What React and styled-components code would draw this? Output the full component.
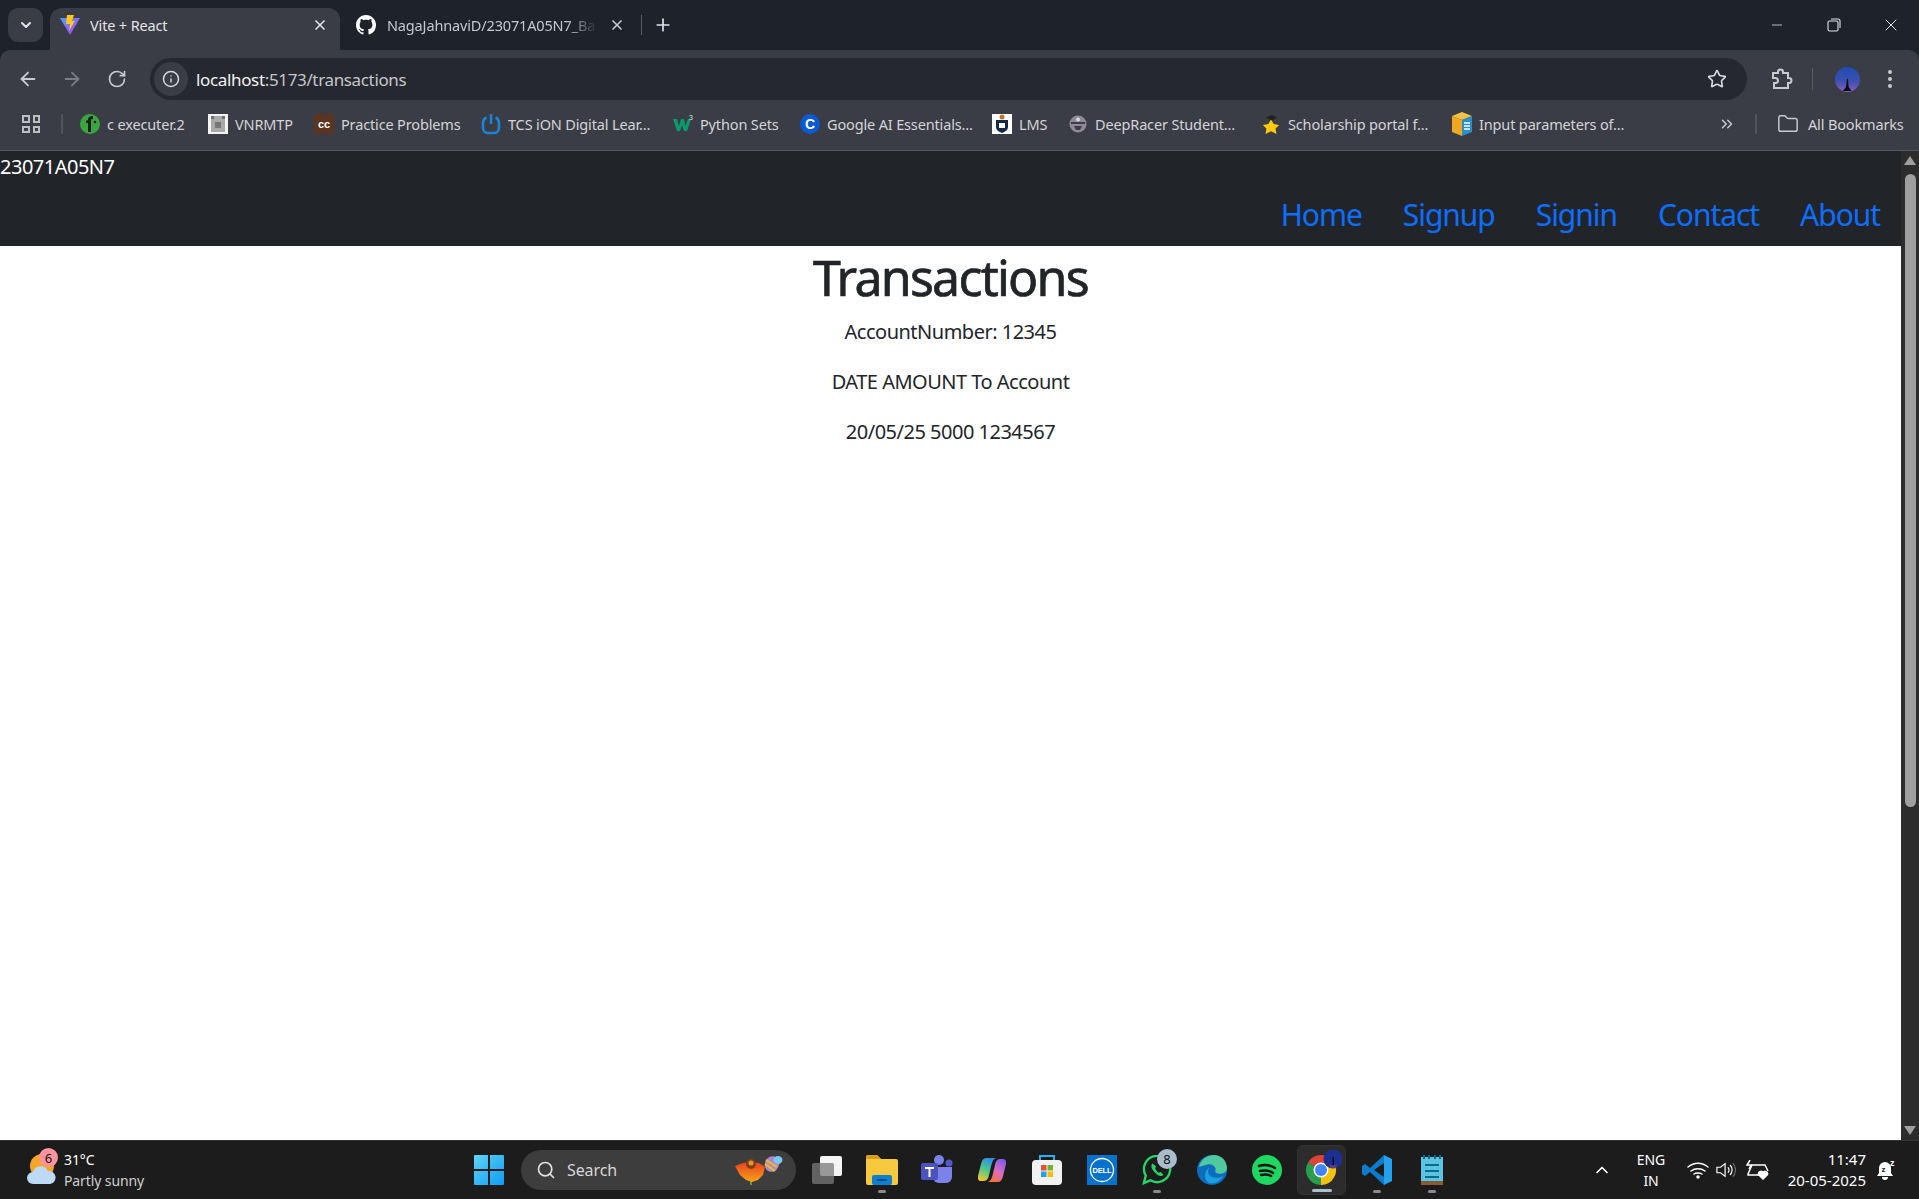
import styled, { createGlobalStyle } from 'styled-components'
import { ArrowLeft, ArrowRight, RotateCw, Info, Star, X, Plus, ChevronDown, ChevronUp, ChevronsRight, Folder, Search, Minus } from 'lucide-react'

const UI_FONT = '"Noto Sans", "Open Sans", sans-serif'

const GlobalStyle = createGlobalStyle`
  html, body { margin: 0; height: 100%; overflow: hidden; background: #fff; }
  body { font-family: ${UI_FONT}; }
  * { box-sizing: border-box; }
`

const Screen = styled.div`
  width: 1919px;
  height: 1199px;
  display: flex;
  flex-direction: column;
  background: #1e222b;
`

/* browser chrome */
const TabStrip = styled.div`
  height: 50px;
  flex: none;
  background: #1e222b;
  display: flex;
  align-items: flex-end;
  padding-left: 8px;
  color: #e3e4e6;
`
const TabMenu = styled.div`
  width: 35px;
  height: 34px;
  margin-bottom: 8px;
  border-radius: 10px;
  background: #3a3d46;
  display: flex;
  align-items: center;
  justify-content: center;
`
const Tab = styled.div`
  width: ${p => p.$width}px;
  height: 42px;
  margin-left: ${p => p.$offset}px;
  padding: 0 ${p => p.$padRight}px 8px 10px;
  display: flex;
  align-items: center;
  gap: ${p => p.$gap}px;
  font-size: 14.5px;
  letter-spacing: -0.15px;
  border-radius: 12px 12px 0 0;
  background: ${p => (p.$active ? '#3a3d46' : 'transparent')};
`
const TabTitle = styled.span`
  flex: 1;
  overflow: hidden;
  white-space: nowrap;
  color: ${p => (p.$dim ? '#c6c8cc' : '#e3e4e6')};
  ${p => (p.$dim ? 'mask-image: linear-gradient(90deg, #000 85%, transparent 100%);' : '')}
`
const TabDivider = styled.div`
  width: 1px;
  height: 20px;
  margin: 0 9px 15px -6px;
  background: #5b5e66;
`
const NewTab = styled.div`
  height: 42px;
  padding-bottom: 8px;
  display: flex;
  align-items: center;
  margin-left: 2px;
`
const WindowControls = styled.div`
  margin-left: auto;
  height: 50px;
  display: flex;
  align-items: center;
`
const WindowButton = styled.div`
  width: 57px;
  display: flex;
  justify-content: center;
`

const Toolbar = styled.div`
  height: 50px;
  flex: none;
  background: #3a3d46;
  border-radius: 10px 10px 0 0;
  padding-top: 8px;
  display: flex;
  align-items: flex-start;
  color: #c8cacd;
`
const NavButtons = styled.div`
  width: 150px;
  height: 42px;
  padding-left: 17px;
  display: flex;
  align-items: center;
  gap: 22px;
`
const ReloadButton = styled.div`
  display: flex;
  margin-left: 2px;
`
const Omnibox = styled.div`
  width: 1597px;
  height: 42px;
  border-radius: 21px;
  background: #262830;
  display: flex;
  align-items: center;
  padding: 0 20px 0 4px;
`
const SiteInfo = styled.div`
  width: 34px;
  height: 34px;
  border-radius: 50%;
  background: #3a3d46;
  display: flex;
  align-items: center;
  justify-content: center;
  margin-right: 8px;
`
const Url = styled.div`
  flex: 1;
  font-size: 17px;
  letter-spacing: -0.35px;
  color: #c4c6ca;
  b { font-weight: 400; color: #f1f2f3; }
`
const ToolbarEnd = styled.div`
  flex: 1;
  height: 42px;
  display: flex;
  align-items: center;
  padding-left: 22px;
`
const ToolbarDivider = styled.div`
  width: 1px;
  height: 22px;
  margin: 0 22px 0 19px;
  background: #565961;
`
const AvatarSlot = styled.div`
  display: flex;
  margin-right: 27px;
`

const BookmarkBar = styled.div`
  height: 51px;
  flex: none;
  background: #3a3d46;
  border-bottom: 1px solid #55575c;
  display: flex;
  align-items: center;
  padding: 0 0 2px 22px;
  font-size: 14.5px;
  letter-spacing: -0.15px;
  color: #d3d4d7;
`
const AppsGrid = styled.div`
  width: 18px;
  height: 18px;
  display: grid;
  grid-template-columns: 1fr 1fr;
  gap: 3px;
  span { border: 2px solid #bdbec2; }
`
const BarDivider = styled.div`
  width: 2px;
  height: 20px;
  background: #50535b;
  margin: ${p => p.$margin};
`
const Bookmark = styled.div`
  flex: 0 0 ${p => p.$width}px;
  display: flex;
  align-items: center;
  gap: 7px;
  white-space: nowrap;
`
const Favicon = styled.div`
  width: 20px;
  height: 20px;
  flex: none;
  display: flex;
  align-items: center;
  justify-content: center;
  font: 700 ${p => p.$size || 11}px/1 "Liberation Sans", sans-serif;
  letter-spacing: 0;
  color: #fff;
  background: ${p => p.$bg || 'transparent'};
  border-radius: ${p => (p.$round ? '50%' : '0')};
`
const AllBookmarks = styled.div`
  display: flex;
  align-items: center;
  gap: 9px;
  white-space: nowrap;
`

/* page */
const Viewport = styled.div`
  flex: 1;
  display: flex;
  min-height: 0;
`
const Page = styled.div`
  flex: 1;
  background: #fff;
  color: #212529;
`
const Navbar = styled.nav`
  height: 95px;
  background: #212529;
  color: #fff;
  font-size: 20px;
  line-height: 30px;
  display: flex;
  flex-direction: column;
  padding-top: 1px;
`
const Brand = styled.div`
  height: 30px;
  letter-spacing: -0.5px;
`
const NavLinks = styled.div`
  flex: 1;
  display: flex;
  justify-content: flex-end;
  align-items: center;
  gap: 41px;
  padding-right: 21px;
`
const NavLink = styled.a`
  color: #0d6efd;
  font-size: 30px;
  letter-spacing: -1.05px;
  line-height: 45px;
`
const Content = styled.main`
  text-align: center;
  padding-top: 1px;
`
const Title = styled.h1`
  margin: 0 0 10px;
  font-size: 50px;
  line-height: 60px;
  font-weight: 400;
  -webkit-text-stroke: 0.7px #212529;
  letter-spacing: -1.75px;
`
const Line = styled.p`
  margin: 0 0 20px;
  font-size: 20px;
  line-height: 30px;
  letter-spacing: -0.5px;
`
const Scrollbar = styled.div`
  width: 18px;
  flex: none;
  background: #2c2c2c;
  display: flex;
  flex-direction: column;
  align-items: center;
  padding: 5px 0;
`
const ScrollArrow = styled.div`
  width: 0;
  height: 0;
  border-left: 6px solid transparent;
  border-right: 6px solid transparent;
  ${p => (p.$down ? 'border-top: 9px solid #9f9f9f;' : 'border-bottom: 9px solid #9f9f9f;')}
  ${p => (p.$down ? 'margin-top: auto;' : '')}
`
const ScrollThumb = styled.div`
  width: 11px;
  height: 633px;
  margin-top: 9px;
  border-radius: 6px;
  background: #9f9f9f;
`

/* taskbar */
const Taskbar = styled.footer`
  height: 59px;
  flex: none;
  background: #1c1c1c;
  border-top: 1px solid #333;
  display: flex;
  align-items: center;
  color: #fff;
  font-size: 14px;
  letter-spacing: -0.1px;
`
const Weather = styled.div`
  width: 461px;
  height: 100%;
  padding-left: 27px;
  display: flex;
  align-items: center;
  gap: 8px;
`
const WeatherIcon = styled.div`
  position: relative;
  width: 29px;
  height: 36px;
`
const Badge = styled.span`
  position: absolute;
  display: flex;
  align-items: center;
  justify-content: center;
  color: #111;
  font-size: 13px;
  letter-spacing: 0;
  border-radius: 50%;
  background: ${p => p.$bg};
  top: ${p => p.$top}px;
  left: ${p => p.$left}px;
  width: ${p => p.$size}px;
  height: ${p => p.$size}px;
`
const WeatherText = styled.div`
  display: flex;
  flex-direction: column;
  line-height: 21px;
  font-size: 14px;
  span:last-child { color: #cfcfcf; }
`
const Slot = styled.div`
  position: relative;
  width: ${p => (p.$active ? 49 : 55)}px;
  margin: ${p => (p.$active ? '0 3px' : '0')};
  height: 50px;
  flex: none;
  display: flex;
  align-items: center;
  justify-content: center;
  border-radius: 6px;
  background: ${p => (p.$active ? '#2c2c2c' : 'transparent')};
  ${p => (p.$active ? 'border: 1px solid #333;' : '')}
`
const StartSlot = styled(Slot)`
  margin-right: 5px;
`
const RunDot = styled.span`
  position: absolute;
  bottom: 2px;
  left: 50%;
  transform: translateX(-50%);
  width: ${p => (p.$wide ? 20 : 8)}px;
  height: 3px;
  border-radius: 2px;
  background: ${p => (p.$wide ? '#a8c0d0' : '#8a8a8a')};
`
const SearchBox = styled.div`
  width: 275px;
  height: 40px;
  border-radius: 20px;
  background: #3d3d3d;
  display: flex;
  align-items: center;
  gap: 11px;
  padding: 0 13px 0 15px;
  color: #d6d6d6;
  font-size: 16px;
  margin-right: 3px;
`
const SearchLabel = styled.span`
  flex: 1;
`
const Tray = styled.div`
  margin-left: auto;
  padding-right: 13px;
  display: flex;
  align-items: center;
  height: 100%;
`
const TrayIcon = styled.div`
  width: ${p => p.$width}px;
  display: flex;
  justify-content: center;
`
const Language = styled.div`
  width: 58px;
  text-align: center;
  font-size: 14px;
  line-height: 21px;
`
const Clock = styled.div`
  width: 86px;
  text-align: right;
  font-size: 15px;
  letter-spacing: 0;
  line-height: 21px;
`

const Vite = () => (
  <svg width="20" height="20" viewBox="0 0 20 20">
    <defs>
      <linearGradient id="vite" x1="0" y1="0" x2="1" y2="1">
        <stop offset="0" stopColor="#46a6ff" />
        <stop offset="1" stopColor="#bd34fe" />
      </linearGradient>
    </defs>
    <path d="M0 3l10 17L20 3z" fill="url(#vite)" />
    <path d="M7 0h7l-2 6h3l-6 10 1-7H6z" fill="#ffc517" />
  </svg>
)

const GitHub = () => (
  <svg width="20" height="20" viewBox="0 0 16 16" fill="#fff">
    <path d="M8 0C3.58 0 0 3.58 0 8c0 3.54 2.29 6.53 5.47 7.59.4.07.55-.17.55-.38 0-.19-.01-.82-.01-1.49-2.01.37-2.53-.49-2.69-.94-.09-.23-.48-.94-.82-1.13-.28-.15-.68-.52-.01-.53.63-.01 1.08.58 1.23.82.72 1.21 1.87.87 2.33.66.07-.52.28-.87.51-1.07-1.78-.2-3.64-.89-3.64-3.95 0-.87.31-1.59.82-2.15-.08-.2-.36-1.02.08-2.12 0 0 .67-.21 2.2.82.64-.18 1.32-.27 2-.27s1.36.09 2 .27c1.53-1.04 2.2-.82 2.2-.82.44 1.1.16 1.92.08 2.12.51.56.82 1.27.82 2.15 0 3.07-1.87 3.75-3.65 3.95.29.25.54.73.54 1.48 0 1.07-.01 1.93-.01 2.2 0 .21.15.46.55.38A8.01 8.01 0 0016 8c0-4.42-3.58-8-8-8z" />
  </svg>
)

const Puzzle = () => (
  <svg width="24" height="24" viewBox="0 0 24 24" fill="none" stroke="#c8cacd" strokeWidth="2">
    <path d="M4 6h5V5a2.500 2.500 0 015 0v1h5v5h1a2.500 2.500 0 010 5h-1v5H5v-5h1.500a2.500 2.500 0 000-5H4z" />
  </svg>
)

const Kebab = () => (
  <svg width="6" height="20" viewBox="0 0 6 20" fill="#c8cacd">
    <circle cx="3" cy="3" r="2" />
    <circle cx="3" cy="10" r="2" />
    <circle cx="3" cy="17" r="2" />
  </svg>
)

const Avatar = () => (
  <svg width="25" height="25" viewBox="0 0 25 25">
    <defs>
      <linearGradient id="sky" x1="0" y1="0" x2="0" y2="1">
        <stop offset="0" stopColor="#1f4db5" />
        <stop offset=".55" stopColor="#3a4fb0" />
        <stop offset="1" stopColor="#8a5cc0" />
      </linearGradient>
    </defs>
    <circle cx="12.500" cy="12.500" r="12.500" fill="url(#sky)" />
    <path d="M12 12h1l.6 8 3 4H8l3-4z" fill="#0b0b12" />
  </svg>
)

const RestoreIcon = () => (
  <svg width="14" height="14" viewBox="0 0 14 14" fill="none" stroke="#e3e4e6" strokeWidth="1.100">
    <rect x="1" y="3" width="10" height="10" rx="1.500" />
    <path d="M4 1h7a2 2 0 012 2v7" />
  </svg>
)

const Power = () => (
  <svg width="20" height="22" viewBox="0 0 20 22" fill="none" stroke="#1a84d8" strokeWidth="2.600">
    <path d="M10 1v10M5.500 4.500A6 6 0 002 9.500V15a5 5 0 005 5h6a5 5 0 005-5V9.500a6 6 0 00-3.500-5" />
  </svg>
)

const W3 = () => (
  <svg width="20" height="20" viewBox="0 0 20 20" fill="#0a9a6c">
    <path d="M0 5h4l2 7 2-7h3l1.500 7L15 5h3l-4 12h-3l-2-6-2 6H4z" />
    <text x="16" y="6" fontSize="7" fontFamily="Liberation Sans, sans-serif" fill="#c9e6da">3</text>
  </svg>
)

const Shield = () => (
  <svg width="20" height="20" viewBox="0 0 20 20">
    <rect width="20" height="20" fill="#fff" />
    <circle cx="10" cy="3" r="2.500" fill="#c0752c" />
    <path d="M4 6h12v7c0 3-3 5-6 6-3-1-6-3-6-6z" fill="#14284a" />
    <rect x="7" y="9" width="6" height="5" fill="#fff" />
  </svg>
)

const Racer = () => (
  <svg width="20" height="20" viewBox="0 0 20 20">
    <circle cx="10" cy="10" r="8.500" fill="#8e8a98" />
    <path d="M3 8h14v2H3zM6 12h8l-2 4H8z" fill="#3e3a4a" />
    <circle cx="10" cy="5.500" r="2" fill="#d8d8de" />
  </svg>
)

const StarCap = () => (
  <svg width="20" height="22" viewBox="0 0 22 22">
    <path d="M11 6l3 5 6 1-4 4 1 6-6-3-6 3 1-6-4-4 6-1z" fill="#ffc90e" />
    <path d="M5 4l7-3 6 3-6 3z" fill="#222" />
  </svg>
)

const BookBox = () => (
  <svg width="20" height="24" viewBox="0 0 20 24">
    <path d="M10 0l10 4-10 4L0 4z" fill="#f2c14a" />
    <path d="M0 4l10 4v16L0 20z" fill="#efa81f" />
    <path d="M10 8l10-4v16l-10 4z" fill="#2a8fc7" />
    <path d="M12 11h6M12 14h6M12 17h6" stroke="#fff" strokeWidth="1.500" />
  </svg>
)

const Fiddle = () => (
  <svg width="20" height="20" viewBox="0 0 20 20">
    <circle cx="10" cy="10" r="10" fill="#3aa63e" />
    <path d="M8 18V9H6V7l2-1c0-3 2-4 5-4v3h-1.500L11 7v11z" fill="#1b1f22" />
    <circle cx="15" cy="8" r="1.300" fill="#1b1f22" />
  </svg>
)

const Tower = () => (
  <svg width="20" height="20" viewBox="0 0 20 20">
    <rect width="20" height="20" fill="#f4f4f4" />
    <rect x="3" y="2" width="14" height="16" fill="#a9a9a9" />
    <rect x="3" y="2" width="3" height="3" fill="#6e6e6e" />
    <rect x="14" y="2" width="3" height="3" fill="#6e6e6e" />
    <rect x="7" y="8" width="6" height="6" fill="#777" />
  </svg>
)

const FolderOutline = () => <Folder size={22} strokeWidth={1.6} color="#c8cacd" />

const bookmarks = [
  { label: 'c executer.2', width: 128, icon: <Fiddle /> },
  { label: 'VNRMTP', width: 106, icon: <Tower /> },
  { label: 'Practice Problems', width: 167, icon: <Favicon $bg="#5a3521">cc</Favicon> },
  { label: 'TCS iON Digital Lear...', width: 192, icon: <Power /> },
  { label: 'Python Sets', width: 127, icon: <W3 /> },
  { label: 'Google AI Essentials...', width: 192, icon: <Favicon $bg="#0b5ad1" $round $size={14}>C</Favicon> },
  { label: 'LMS', width: 76, icon: <Shield /> },
  { label: 'DeepRacer Student...', width: 193, icon: <Racer /> },
  { label: 'Scholarship portal f...', width: 191, icon: <StarCap /> },
  { label: 'Input parameters of...', width: 266, icon: <BookBox /> }
]

const WeatherArt = () => (
  <svg width="29" height="36" viewBox="0 0 29 36">
    <circle cx="15" cy="14" r="12" fill="#f5a623" />
    <path d="M6 32a6 6 0 010-12 8 8 0 0115-1 6.500 6.500 0 012 13z" fill="#bcd9f5" />
  </svg>
)

const WinLogo = () => (
  <svg width="30" height="30" viewBox="0 0 30 30">
    <defs>
      <linearGradient id="win" x1="0" y1="0" x2="1" y2="1">
        <stop offset="0" stopColor="#5fd5f5" />
        <stop offset="1" stopColor="#0f9bf5" />
      </linearGradient>
    </defs>
    <path d="M0 1a1 1 0 011-1h13v14H0zM16 0h13a1 1 0 011 1v13H16zM0 16h14v14H1a1 1 0 01-1-1zM16 16h14v13a1 1 0 01-1 1H16z" fill="url(#win)" />
  </svg>
)

const FlowerAndBee = () => (
  <svg width="48" height="30" viewBox="0 0 48 30">
    <defs>
      <linearGradient id="petal" x1="0" y1="0" x2="0" y2="1">
        <stop offset="0" stopColor="#e8401c" />
        <stop offset="1" stopColor="#f7a21c" />
      </linearGradient>
    </defs>
    <path d="M15 26h2v4h-2z" fill="#6a9a30" />
    <path d="M0 11l8-3 8-1 8 1 6 4-2 8-5 5-6 2-6-2-6-5z" fill="url(#petal)" />
    <circle cx="16" cy="9" r="5" fill="#8a3a18" />
    <circle cx="16" cy="8" r="2.500" fill="#d9a02a" />
    <ellipse cx="37" cy="9" rx="7" ry="8" transform="rotate(25 37 9)" fill="#a48ad6" />
    <path d="M31 5l11 7M30 9l10 7" stroke="#f0b03a" strokeWidth="2.500" />
    <ellipse cx="43" cy="5" rx="4.500" ry="4" fill="#7cc8f5" />
  </svg>
)

const TaskView = () => (
  <svg width="30" height="28" viewBox="0 0 30 28">
    <rect x="8" y="0" width="22" height="20" rx="2" fill="#f4f4f4" />
    <rect x="0" y="7" width="22" height="21" rx="2" fill="#7a7a7a" fillOpacity=".75" />
  </svg>
)

const Explorer = () => (
  <svg width="32" height="30" viewBox="0 0 32 30">
    <path d="M0 2a2 2 0 012-2h9l4 4h15a2 2 0 012 2v22a2 2 0 01-2 2H2a2 2 0 01-2-2z" fill="#f7c93e" />
    <path d="M0 2a2 2 0 012-2h9l4 4H0z" fill="#d99e1c" />
    <rect x="6" y="20" width="20" height="10" rx="2" fill="#0f80d0" />
    <rect x="11" y="24" width="10" height="2" fill="#0a4f8f" />
  </svg>
)

const Teams = () => (
  <svg width="32" height="30" viewBox="0 0 32 30">
    <circle cx="18" cy="5" r="5" fill="#7b83eb" />
    <circle cx="28" cy="8" r="3.500" fill="#5059c9" />
    <path d="M12 12h19v10a6 6 0 01-6 6h-7a6 6 0 01-6-6z" fill="#7b83eb" />
    <rect x="0" y="8" width="17" height="17" rx="2" fill="#4b53bc" />
    <path d="M4 12h9v2h-3.500v8h-2v-8H4z" fill="#fff" />
  </svg>
)

const Copilot = () => (
  <svg width="28" height="24" viewBox="0 0 28 24">
    <defs>
      <linearGradient id="copL" x1="0.6" y1="0" x2="0.2" y2="1">
        <stop offset="0" stopColor="#2d8fe8" />
        <stop offset=".5" stopColor="#4fc88a" />
        <stop offset="1" stopColor="#f4c62f" />
      </linearGradient>
      <linearGradient id="copR" x1="0.8" y1="0" x2="0.3" y2="1">
        <stop offset="0" stopColor="#7a5be8" />
        <stop offset=".5" stopColor="#d86ac8" />
        <stop offset="1" stopColor="#f5743a" />
      </linearGradient>
    </defs>
    <path d="M8 0h10c-2.500 1-3.500 3-4.500 6.500L11 17c-.6 3-2 6-5 6H3c-2.500 0-3.500-2-3-5L3 6c1-4 2.500-6 5-6z" fill="url(#copL)" />
    <path d="M20 24H10c2.500-1 3.500-3 4.500-6.500L17 7c.6-3 2-6 5-6h3c2.500 0 3.500 2 3 5l-3 12c-1 4-2.500 6-5 6z" fill="url(#copR)" />
  </svg>
)

const Store = () => (
  <svg width="30" height="30" viewBox="0 0 30 30">
    <path d="M8 5V1h14v4" fill="none" stroke="#2ab0f0" strokeWidth="2" />
    <rect x="0" y="5" width="30" height="25" rx="4" fill="#f2f2f2" />
    <rect x="9" y="10" width="5.500" height="5.500" fill="#e8503a" />
    <rect x="15.500" y="10" width="5.500" height="5.500" fill="#70b62c" />
    <rect x="9" y="16.500" width="5.500" height="5.500" fill="#1ea5ee" />
    <rect x="15.500" y="16.500" width="5.500" height="5.500" fill="#fbb80f" />
  </svg>
)

const Dell = () => (
  <svg width="30" height="30" viewBox="0 0 30 30">
    <rect width="30" height="30" fill="#0672cb" />
    <circle cx="15" cy="15" r="11.500" fill="none" stroke="#fff" strokeWidth="1.300" />
    <text x="15" y="18" textAnchor="middle" fontSize="7.500" fontWeight="700" fontFamily="Liberation Sans, sans-serif" fill="#fff">DELL</text>
  </svg>
)

const WhatsApp = () => (
  <svg width="30" height="30" viewBox="0 0 32 32" fill="none">
    <path d="M2 30l2-8a14 14 0 115 5z" stroke="#25d366" strokeWidth="2.500" />
    <path d="M11 9c-2 2-1 6 3 10s7 4 9 2l-3-3-2 1c-2-1-3-3-4-5l1-2z" fill="#25d366" />
  </svg>
)

const Edge = () => (
  <svg width="30" height="30" viewBox="0 0 32 32">
    <circle cx="16" cy="16" r="16" fill="#0c6cbe" />
    <path d="M2 13C4 4 12 0 18 0c8 0 14 6 14 14 0 4-4 6-8 6-5 0-5-3-4-5-1-4-5-6-9-5-4 1-7 2-9 3z" fill="#4fc9a0" />
    <path d="M14 13c-3 2-3 7 1 10 4 2 9 2 13-1-3 6-9 9-15 8-6-4-6-14 1-17z" fill="#1a9fe0" />
  </svg>
)

const Spotify = () => (
  <svg width="30" height="30" viewBox="0 0 30 30" fill="none">
    <circle cx="15" cy="15" r="15" fill="#1ed760" />
    <path d="M7 11c6-2 11-1 16 2M8 16c5-1 9-1 13 2M9 20c4-1 7-1 10 1" stroke="#191414" strokeWidth="2.500" strokeLinecap="round" />
  </svg>
)

const Chrome = () => (
  <svg width="40" height="40" viewBox="0 0 40 40">
    <path d="M19 20L6 12.500A15 15 0 0132 12.500z" fill="#db4437" />
    <path d="M19 20L32 12.500A15 15 0 0119 35z" fill="#f4c20d" />
    <path d="M19 20V35A15 15 0 016 12.500z" fill="#2a9d50" />
    <circle cx="19" cy="20" r="7.500" fill="#fff" />
    <circle cx="19" cy="20" r="6" fill="#4285f4" />
    <circle cx="31" cy="9" r="9.500" fill="#1d2f90" />
    <path d="M27 14a6 6 0 008 0l-1 4h-6z" fill="#5a3f86" />
    <rect x="30.500" y="7" width="1.500" height="8" fill="#0a0a1a" />
  </svg>
)

const VSCode = () => (
  <svg width="30" height="30" viewBox="0 0 30 30">
    <path d="M22 0L8 13 3 9l-3 2v8l3 2 5-4 14 13v-8l-10-7 10-7z" fill="#0a7ccb" />
    <path d="M22 0l8 4v22l-8 4z" fill="#24a0ec" />
  </svg>
)

const Notepad = () => (
  <svg width="24" height="30" viewBox="0 0 24 30">
    <rect x="1" y="2" width="22" height="26" fill="#5cc3e2" />
    <rect x="1" y="26" width="22" height="4" fill="#8a5a34" />
    <path d="M5 10h14M5 16h14M5 22h14" stroke="#0b6a8e" strokeWidth="2" />
    <path d="M4 0v4M9 0v4M15 0v4M20 0v4" stroke="#0b6a8e" strokeWidth="2" />
  </svg>
)

const Wifi = () => (
  <svg width="22" height="18" viewBox="0 0 22 18" fill="none" stroke="#fff" strokeWidth="1.500" strokeLinecap="round">
    <path d="M1 6c6-5 14-5 20 0M4 10c4-3 10-3 14 0M7 13c2-1.500 6-1.500 8 0" />
    <circle cx="11" cy="16" r="1" fill="#fff" />
  </svg>
)

const Speaker = () => (
  <svg width="22" height="18" viewBox="0 0 22 18" fill="none" stroke="#fff" strokeWidth="1.300">
    <path d="M1 6h4l5-4v14l-5-4H1z" />
    <path d="M13 6a4 4 0 010 6" />
    <path d="M15.500 3.500a8 8 0 010 11" />
    <path d="M18.500 1.500a11 11 0 010 15" stroke="#666" />
  </svg>
)

const BatteryHeart = () => (
  <svg width="24" height="20" viewBox="0 0 24 20" fill="none" stroke="#fff" strokeWidth="1.500">
    <path d="M2 14L6 5h13l3 6" />
    <path d="M2 14v1h11" />
    <path d="M4 0L1 5h4l-2 4" />
    <path d="M17 19l-4.500-4.500a2.500 2.500 0 014.500-2 2.500 2.500 0 014.500 2z" fill="#fff" />
  </svg>
)

const BellZ = () => (
  <svg width="20" height="22" viewBox="0 0 20 22" fill="#fff">
    <path d="M9 3a6 6 0 00-6 6v5l-2 3h16l-2-3V9a6 6 0 00-6-6zM6 18h6a3 3 0 01-6 0z" />
    <text x="5.500" y="13" fontSize="8" fontWeight="700" fontFamily="Liberation Sans, sans-serif" fill="#1c1c1c">z</text>
    <text x="14" y="7" fontSize="9" fontWeight="700" fontFamily="Liberation Sans, sans-serif">z</text>
  </svg>
)

const taskApps = [
  { key: 'explorer', icon: <Explorer />, dot: true },
  { key: 'teams', icon: <Teams /> },
  { key: 'copilot', icon: <Copilot /> },
  { key: 'store', icon: <Store /> },
  { key: 'dell', icon: <Dell /> },
  { key: 'whatsapp', icon: <WhatsApp />, dot: true, badge: '8' },
  { key: 'edge', icon: <Edge /> },
  { key: 'spotify', icon: <Spotify /> },
  { key: 'chrome', icon: <Chrome />, active: true },
  { key: 'vscode', icon: <VSCode />, dot: true },
  { key: 'notepad', icon: <Notepad />, dot: true }
]

export default function App() {
  return (
    <Screen>
      <GlobalStyle />
      <TabStrip>
        <TabMenu><ChevronDown size={16} strokeWidth={3} color="#e3e4e6" /></TabMenu>
        <Tab $active $width={290} $offset={7} $gap={10} $padRight={12}>
          <Vite />
          <TabTitle>Vite + React</TabTitle>
          <X size={16} strokeWidth={2.5} color="#e3e4e6" />
        </Tab>
        <Tab $width={301} $offset={6} $gap={11} $padRight={22}>
          <GitHub />
          <TabTitle $dim>NagaJahnaviD/23071A05N7_Ba</TabTitle>
          <X size={16} strokeWidth={2.5} color="#c8cacd" />
        </Tab>
        <TabDivider />
        <NewTab><Plus size={20} strokeWidth={2} color="#e3e4e6" /></NewTab>
        <WindowControls>
          <WindowButton><Minus size={16} strokeWidth={1.2} color="#e3e4e6" /></WindowButton>
          <WindowButton><RestoreIcon /></WindowButton>
          <WindowButton><X size={20} strokeWidth={1.2} color="#e3e4e6" /></WindowButton>
        </WindowControls>
      </TabStrip>

      <Toolbar>
        <NavButtons>
          <ArrowLeft size={22} strokeWidth={2} color="#c8cacd" />
          <ArrowRight size={22} strokeWidth={2} color="#7b7d83" />
          <ReloadButton><RotateCw size={20} strokeWidth={2} color="#c8cacd" /></ReloadButton>
        </NavButtons>
        <Omnibox>
          <SiteInfo><Info size={18} strokeWidth={2} color="#d6d7da" /></SiteInfo>
          <Url><b>localhost</b>:5173/transactions</Url>
          <Star size={20} strokeWidth={2} color="#d6d7da" />
        </Omnibox>
        <ToolbarEnd>
          <Puzzle />
          <ToolbarDivider />
          <AvatarSlot><Avatar /></AvatarSlot>
          <Kebab />
        </ToolbarEnd>
      </Toolbar>

      <BookmarkBar>
        <AppsGrid><span /><span /><span /><span /></AppsGrid>
        <BarDivider $margin="0 17px 0 21px" />
        {bookmarks.map(({ label, width, icon }) => (
          <Bookmark key={label} $width={width}>{icon}{label}</Bookmark>
        ))}
        <ChevronsRight size={18} color="#c8cacd" />
        <BarDivider $margin="0 20px 0 19px" />
        <AllBookmarks><FolderOutline />All Bookmarks</AllBookmarks>
      </BookmarkBar>

      <Viewport>
        <Page>
          <Navbar>
            <Brand>23071A05N7</Brand>
            <NavLinks>
              <NavLink>Home</NavLink>
              <NavLink>Signup</NavLink>
              <NavLink>Signin</NavLink>
              <NavLink>Contact</NavLink>
              <NavLink>About</NavLink>
            </NavLinks>
          </Navbar>
          <Content>
            <Title>Transactions</Title>
            <Line>AccountNumber: 12345</Line>
            <Line>DATE AMOUNT To Account</Line>
            <Line>20/05/25 5000 1234567</Line>
          </Content>
        </Page>
        <Scrollbar>
          <ScrollArrow />
          <ScrollThumb />
          <ScrollArrow $down />
        </Scrollbar>
      </Viewport>

      <Taskbar>
        <Weather>
          <WeatherIcon>
            <WeatherArt />
            <Badge $bg="#ff949c" $top={-4} $left={12} $size={19}>6</Badge>
          </WeatherIcon>
          <WeatherText><span>31°C</span><span>Partly sunny</span></WeatherText>
        </Weather>
        <StartSlot><WinLogo /></StartSlot>
        <SearchBox>
          <Search size={20} strokeWidth={2} color="#e0e0e0" />
          <SearchLabel>Search</SearchLabel>
          <FlowerAndBee />
        </SearchBox>
        <Slot><TaskView /></Slot>
        {taskApps.map(({ key, icon, dot, badge, active }) => (
          <Slot key={key} $active={active}>
            {icon}
            {badge && <Badge $bg="#a9bccb" $top={4} $left={28} $size={20}>{badge}</Badge>}
            {dot && <RunDot />}
            {active && <RunDot $wide />}
          </Slot>
        ))}
        <Tray>
          <TrayIcon $width={40}><ChevronUp size={20} strokeWidth={2} /></TrayIcon>
          <Language>ENG<br />IN</Language>
          <TrayIcon $width={36}><Wifi /></TrayIcon>
          <TrayIcon $width={20}><Speaker /></TrayIcon>
          <TrayIcon $width={44}><BatteryHeart /></TrayIcon>
          <Clock>11:47<br />20-05-2025</Clock>
          <TrayIcon $width={40}><BellZ /></TrayIcon>
        </Tray>
      </Taskbar>
    </Screen>
  )
}
